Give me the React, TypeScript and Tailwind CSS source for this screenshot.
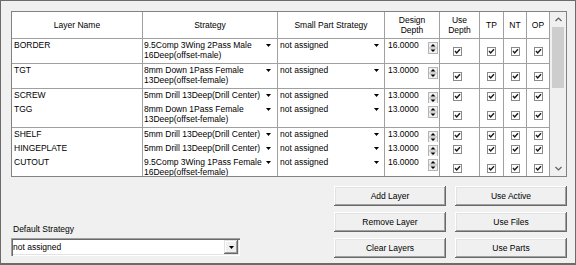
import React from "react";

type Row = { name: string; s: string[]; d: string };

const rows: Row[] = [
  { name: "BORDER", s: ["9.5Comp 3Wing 2Pass Male", "16Deep(offset-male)"], d: "16.0000" },
  { name: "TGT", s: ["8mm Down 1Pass Female", "13Deep(offset-female)"], d: "13.0000" },
  { name: "SCREW", s: ["5mm Drill 13Deep(Drill Center)"], d: "13.0000" },
  { name: "TGG", s: ["8mm Down 1Pass Female", "13Deep(offset-female)"], d: "13.0000" },
  { name: "SHELF", s: ["5mm Drill 13Deep(Drill Center)"], d: "13.0000" },
  { name: "HINGEPLATE", s: ["5mm Drill 13Deep(Drill Center)"], d: "13.0000" },
  { name: "CUTOUT", s: ["9.5Comp 3Wing 1Pass Female", "16Deep(offset-female)"], d: "16.0000" },
];

const Arrow = () => (
  <svg width="5" height="3" viewBox="0 0 5 3" className="shrink-0">
    <polygon points="0,0 5,0 2.5,3" fill="#000" />
  </svg>
);

const Spinner = () => (
  <svg width="10" height="12" viewBox="0 0 10 12" className="shrink-0">
    <rect x="0.5" y="0.5" width="9" height="11" fill="#f0f0f0" stroke="#b4b4b4" />
    <line x1="1" y1="6" x2="9" y2="6" stroke="#b4b4b4" />
    <polygon points="2.5,4.5 7.5,4.5 5,2" fill="#000" />
    <polygon points="2.5,7.5 7.5,7.5 5,10" fill="#000" />
  </svg>
);

const Check = () => (
  <svg width="9" height="9" viewBox="0 0 9 9">
    <rect x="0.5" y="0.5" width="8" height="8" fill="#fff" stroke="#8a8a8a" />
    <polyline points="2,4 3.7,6 7,2.3" fill="none" stroke="#1a1a1a" strokeWidth="1.4" />
  </svg>
);

const Chevron = ({ up }: { up?: boolean }) => (
  <svg width="7" height="5" viewBox="0 0 7 5">
    <polyline
      points={up ? "0.5,4 3.5,1 6.5,4" : "0.5,1 3.5,4 6.5,1"}
      fill="none"
      stroke="#606060"
      strokeWidth="1.2"
    />
  </svg>
);

const cols = "grid grid-cols-[131px_135px_107px_55px_40px_24px_23px_23px]";
const cell = "border-r border-b border-[#a0a0a0] bg-white";

function DataRow({ r }: { r: Row }) {
  const h = r.s.length > 1 ? "h-[25px]" : "h-[14px]";
  return (
    <div className={`${cols} ${h}`}>
      <div className={`${cell} pl-[2px] pt-[1px] leading-[10px]`}>{r.name}</div>
      <div className={`${cell} pl-[1px] pt-[1px] pr-[6px] leading-[10px] flex items-start`}>
        <div className="flex-1 whitespace-nowrap">
          {r.s.map((l, i) => (
            <div key={i}>{l}</div>
          ))}
        </div>
        <div className="pt-[4px]">
          <Arrow />
        </div>
      </div>
      <div className={`${cell} pl-[2px] pt-[1px] pr-[5px] leading-[10px] flex items-start`}>
        <div className="flex-1 whitespace-nowrap">not assigned</div>
        <div className="pt-[4px]">
          <Arrow />
        </div>
      </div>
      <div className={`${cell} pl-[3px] pt-[1px] pr-[1px] leading-[10px] flex items-start`}>
        <div className="flex-1 whitespace-nowrap">{r.d}</div>
        <div className="pt-[2px]">
          <Spinner />
        </div>
      </div>
      <div className={`${cell} flex items-center justify-center pr-[4px]`}>
        <Check />
      </div>
      <div className={`${cell} flex items-center justify-center`}>
        <Check />
      </div>
      <div className={`${cell} flex items-center justify-center`}>
        <Check />
      </div>
      <div className={`${cell} flex items-center justify-center`}>
        <Check />
      </div>
    </div>
  );
}

const hcell =
  "border-r border-b border-[#a0a0a0] bg-white flex items-center justify-center text-center leading-[10px]";

const btn =
  "h-[20px] bg-[#f0f0f0] flex items-center justify-center shadow-[inset_-1px_-1px_0_#696969,inset_1px_1px_0_#ffffff,inset_-2px_-2px_0_#a0a0a0,inset_2px_2px_0_#e3e3e3]";

export default function App() {
  return (
    <div className="w-[576px] h-[265px] bg-[#f0f0f0] border border-[#6b6b6b] border-b-2 pl-[10px] pt-[10px] font-['Liberation_Sans',Arial,sans-serif] text-[8.5px] text-black overflow-hidden">
      {/* grid */}
      <div className="w-[556px] h-[166px] border border-[#828282] bg-[#f0f0f0] flex">
        <div className="w-[538px] h-[164px] overflow-hidden">
          <div className={`${cols} h-[27px]`}>
            <div className={hcell}>Layer Name</div>
            <div className={hcell}>Strategy</div>
            <div className={hcell}>Small Part Strategy</div>
            <div className={hcell}>
              Design
              <br />
              Depth
            </div>
            <div className={hcell}>
              Use
              <br />
              Depth
            </div>
            <div className={hcell}>TP</div>
            <div className={hcell}>NT</div>
            <div className={hcell}>OP</div>
          </div>
          {rows.map((r) => (
            <DataRow key={r.name} r={r} />
          ))}
        </div>
        <div className="w-[16px] h-[164px] bg-[#f0f0f0] flex flex-col items-center">
          <div className="h-[15px] flex items-center justify-center">
            <Chevron up />
          </div>
          <div className="w-[12px] h-[61px] bg-[#cdcdcd]" />
          <div className="flex-1" />
          <div className="h-[15px] flex items-center justify-center">
            <Chevron />
          </div>
        </div>
      </div>

      {/* bottom */}
      <div className="flex mt-[9px]">
        <div className="w-[229px] flex flex-col justify-end pb-[2px]">
          <div className="leading-[10px] mb-[4px] pl-[2px]">Default Strategy</div>
          <div className="h-[18px] bg-white flex items-center shadow-[inset_1px_1px_0_#a0a0a0,inset_2px_2px_0_#696969,inset_-1px_-1px_0_#ffffff,inset_-2px_-2px_0_#e3e3e3] pl-[2px] pr-[2px]">
            <div className="flex-1 leading-[10px]">not assigned</div>
            <div className={`w-[14px] h-[14px] bg-[#f0f0f0] flex items-center justify-center shadow-[inset_-1px_-1px_0_#696969,inset_1px_1px_0_#e3e3e3,inset_-2px_-2px_0_#a0a0a0,inset_2px_2px_0_#ffffff]`}>
              <Arrow />
            </div>
          </div>
        </div>
        <div className="ml-[94px] grid grid-cols-[112px_112px] gap-x-[9px] gap-y-[6px]">
          <div className={btn}>Add Layer</div>
          <div className={btn}>Use Active</div>
          <div className={btn}>Remove Layer</div>
          <div className={btn}>Use Files</div>
          <div className={btn}>Clear Layers</div>
          <div className={btn}>Use Parts</div>
        </div>
      </div>
    </div>
  );
}
